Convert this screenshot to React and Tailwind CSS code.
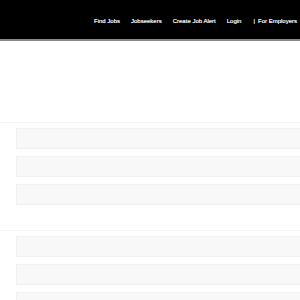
const links = ["Find Jobs", "Jobseekers", "Create Job Alert", "Login"];

const Rows = () => (
  <div className="border-t border-[#f3f3f3] pt-[5px] pl-4">
    {[0, 1, 2].map((i) => (
      <div
        key={i}
        className="w-[320px] h-[21px] mb-[7px] bg-[#f8f8f8] border border-[#f1f1f1]"
      />
    ))}
  </div>
);

export default function App() {
  return (
    <div className="w-[300px] h-[300px] overflow-hidden bg-white font-['Liberation_Sans',sans-serif]">
      <header className="h-[41px] bg-black border-b-2 border-[#8a8a8a] flex items-center justify-end pr-[3px] pt-[4px]">
        <nav className="flex items-center text-[6px] text-[#efefef] [text-shadow:0_0_0.3px_#fff]">
          {links.map((l) => (
            <span key={l} className="ml-[11px]">
              {l}
            </span>
          ))}
          <span className="ml-[12px] mr-[3px]">|</span>
          <span>For Employers</span>
        </nav>
      </header>
      <div className="h-[81px]" />
      <Rows />
      <div className="h-[18px]" />
      <Rows />
    </div>
  );
}
